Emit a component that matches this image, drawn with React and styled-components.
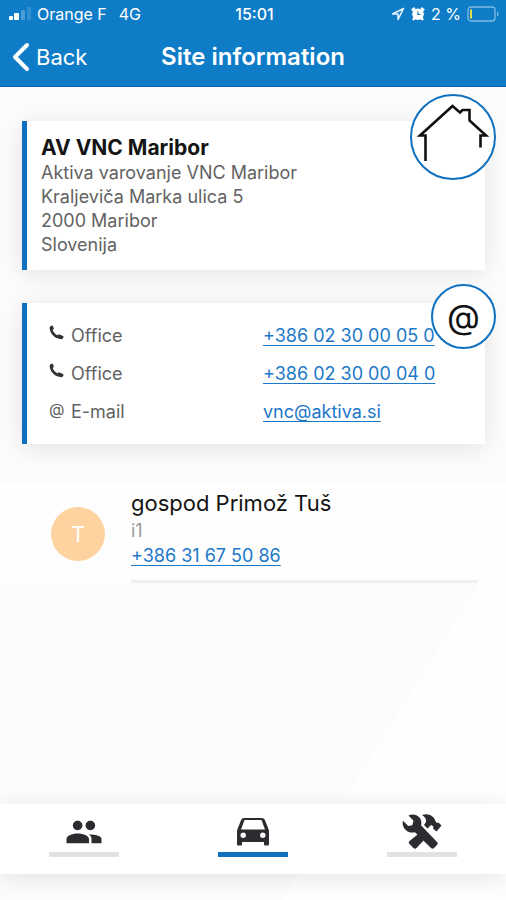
import React from 'react';
import styled, { createGlobalStyle, ThemeProvider } from 'styled-components';
import { IoMdPeople } from 'react-icons/io';

const theme = {
  blue: '#0f7cc8',
  accent: '#0f70bf',
  link: '#1c78c8',
  ink: '#141414',
  grey: '#626262',
  fontFamily: 'Inter, "Liberation Sans", sans-serif',
};

const lines = [
  'Aktiva varovanje VNC Maribor',
  'Kraljeviča Marka ulica 5',
  '2000 Maribor',
  'Slovenija',
];

const channels = [
  { kind: 'phone', label: 'Office', value: '+386 02 30 00 05 0', href: 'tel:+38602300005' },
  { kind: 'phone', label: 'Office', value: '+386 02 30 00 04 0', href: 'tel:+38602300004' },
  { kind: 'mail', label: 'E-mail', value: 'vnc@aktiva.si', href: 'mailto:vnc@aktiva.si' },
];

const SignalIcon = () => (
  <svg width="24" height="14" viewBox="0 0 24 14" fill="#fff" aria-hidden="true">
    <rect x="0" y="9" width="4" height="4" rx="1" />
    <rect x="5" y="6" width="5" height="7" rx="1" />
    <rect x="12" y="3" width="4" height="10" rx="1" opacity=".25" />
    <rect x="18" y="0" width="4" height="13" rx="1" opacity=".15" />
  </svg>
);

const LocationIcon = () => (
  <svg width="14" height="14" viewBox="0 0 14 14" fill="none" aria-hidden="true">
    <path d="M12.5 1.5 1.5 7H7v5.5z" stroke="#e6f2fb" strokeWidth="1.6" strokeLinejoin="round" />
  </svg>
);

const AlarmIcon = () => (
  <svg width="14" height="14" viewBox="0 0 14 14" aria-hidden="true">
    <path d="M1 3.5 3.8 1M13 3.5 10.2 1M2 13l2-2.5M12 13l-2-2.5" stroke="#fff" strokeWidth="2.5" />
    <circle cx="7" cy="7.2" r="5.8" fill="#fff" />
    <path d="M7 4.5v3h2.4" fill="none" stroke="#0f7cc8" strokeWidth="1.2" />
  </svg>
);

const BatteryIcon = () => (
  <svg width="33" height="16" viewBox="0 0 33 16" fill="none" aria-hidden="true">
    <rect x="1" y="1" width="27" height="14" rx="3" stroke="#7fbae3" strokeWidth="1.3" />
    <rect x="3" y="3.5" width="2" height="9" fill="#e3dd4d" />
    <path d="M30 5.5c2 .8 2 4.2 0 5z" fill="#7fbae3" />
  </svg>
);

const ChevronIcon = () => (
  <svg width="18" height="30" viewBox="0 0 18 30" fill="none" aria-hidden="true">
    <path d="M15 3 3 15l12 12" stroke="#fff" strokeWidth="4" strokeLinecap="round" strokeLinejoin="round" />
  </svg>
);

const HouseIcon = () => (
  <svg width="82" height="82" viewBox="0 0 82 82" fill="none" aria-hidden="true">
    <path
      d="M13.5 65V39.500H8L40.500 10l7.500 6.500 2.500-2.500h7V24.500L74 39.500H68.500V51.500"
      stroke="#111"
      strokeWidth="2.600"
    />
  </svg>
);

const PhoneIcon = () => (
  <svg width="16" height="16" viewBox="0 0 16 16" fill="#333" aria-hidden="true">
    <path d="M1.3 1.4 2.8.6c.5-.2.9 0 1.100.5l.9 2.300c.1.4 0 .7-.3.900l-.9.7c.9 2.200 2.500 4 4.800 5.200l1-.7c.3-.3.600-.3 1-.1l3.600 1.700c.5.3.7.7.5 1.200l-.6 1c-.3.600-.8.900-1.500.9C6.300 14 1 9.300.6 3.100c0-.8.200-1.400.7-1.700z" />
  </svg>
);

const CarIcon = () => (
  <svg width="34" height="28" viewBox="0 0 34 28" fill="currentColor" aria-hidden="true">
    <path
      fillRule="evenodd"
      d="M8.500 0h17c1.800 0 3 .8 3.600 2.500L33 12.500V26c0 1-.6 1.500-1.500 1.500h-2c-1 0-1.500-.5-1.500-1.500v-2H6v2c0 1-.5 1.500-1.500 1.500h-2C1.600 27.500 1 27 1 26V12.500L4.900 2.500C5.500.8 6.700 0 8.500 0zM8.500 2 5 11.500h24L25.500 2zM7.200 14.500a2.700 2.700 0 1 0 0 5.400 2.700 2.700 0 0 0 0-5.400zm19.600 0a2.700 2.700 0 1 0 0 5.400 2.700 2.700 0 0 0 0-5.400z"
    />
  </svg>
);

const ToolsIcon = () => (
  <svg width="40" height="36" viewBox="0 0 40 36" fill="currentColor" aria-hidden="true">
    <path d="M6.500 1.500C9.500-.2 14 0 17 3c2.300 2.300 2.900 5.500 2 8.300L35 28c1 1 1 2 0 3l-3 3c-1 1-2 1-3 0L13 18.200c-3.300.9-6.700.3-9.200-2.200C1 13.200 0 10 1 6.800l5.300 5.200 4-.8 1.200-4.400z" />
    <path d="m17.500 19 6 5.500-9 9.500c-1 1-2 1-3 0l-4-4c-1-1-1-2 0-3z" />
    <path d="M20 1c4.500-1.500 8.500-.5 11.500 2.500 1.800 1.800 1.500 4 3.500 5.500l1.500-.5 3 3-5 6-3.500-3 .5-2-2.500-1.500-3.500 3.500-3.500-3.500 2-3c.5-3-1-5-4-7z" />
  </svg>
);

const tabs = [
  { name: 'People', Icon: IoMdPeople },
  { name: 'Site', Icon: CarIcon, active: true },
  { name: 'Service', Icon: ToolsIcon },
];

const App = () => (
  <ThemeProvider theme={theme}>
    <GlobalStyle />
    <StyledPage>
      <StyledHeader>
        <StyledStatus>
          <StyledStatusGroup>
            <SignalIcon />
            <span>Orange F</span>
            <StyledNetwork>4G</StyledNetwork>
          </StyledStatusGroup>
          <StyledTime>15:01</StyledTime>
          <StyledStatusGroup $end>
            <LocationIcon />
            <AlarmIcon />
            <span>2 %</span>
            <BatteryIcon />
          </StyledStatusGroup>
        </StyledStatus>
        <StyledNav>
          <StyledBack type="button">
            <ChevronIcon />
            Back
          </StyledBack>
          <StyledTitle>Site information</StyledTitle>
        </StyledNav>
      </StyledHeader>

      <StyledMain>
        <StyledCard>
          <StyledBadge $size={86} $top={-27} $right={-11}>
            <HouseIcon />
          </StyledBadge>
          <StyledSiteName>AV VNC Maribor</StyledSiteName>
          {lines.map((line) => (
            <StyledLine key={line}>{line}</StyledLine>
          ))}
        </StyledCard>

        <StyledCard>
          <StyledBadge $size={65} $top={-19} $right={-11}>
            @
          </StyledBadge>
          <StyledChannels>
            {channels.map(({ kind, label, value, href }) => (
              <StyledChannel key={value}>
                <StyledKind>{kind === 'phone' ? <PhoneIcon /> : '@'}</StyledKind>
                <span>{label}</span>
                <StyledLink href={href}>{value}</StyledLink>
              </StyledChannel>
            ))}
          </StyledChannels>
        </StyledCard>
      </StyledMain>

      <StyledPerson>
        <StyledAvatar>T</StyledAvatar>
        <StyledDetails>
          <StyledName>gospod Primož Tuš</StyledName>
          <StyledRole>i1</StyledRole>
          <StyledLink href="tel:+38631675086">+386 31 67 50 86</StyledLink>
        </StyledDetails>
      </StyledPerson>

      <StyledTabs>
        {tabs.map(({ name, Icon, active }) => (
          <StyledTab key={name} type="button" aria-label={name} $active={active}>
            <Icon size={40} />
          </StyledTab>
        ))}
      </StyledTabs>
    </StyledPage>
  </ThemeProvider>
);

const GlobalStyle = createGlobalStyle`
  *, *::before, *::after {
    box-sizing: border-box;
  }
  body {
    margin: 0;
  }
  button {
    background: transparent;
    border: 0;
    padding: 0;
    font: inherit;
    color: inherit;
    cursor: pointer;
  }
  h1, h2, h3, p, ul {
    margin: 0;
    padding: 0;
  }
`;

const StyledPage = styled.div`
  min-height: 100vh;
  display: flex;
  flex-direction: column;
  padding-bottom: 26px;
  background: linear-gradient(122deg, #fcfcfc 0 79%, #fefefe 79%);
  color: ${({ theme }) => theme.grey};
  font-family: ${({ theme }) => theme.fontFamily};
  font-size: 18px;
  line-height: 24px;
`;

const StyledHeader = styled.header`
  background: ${({ theme }) => theme.blue};
  border-bottom: 1px solid #0a62b0;
  color: #fff;
`;

const StyledStatus = styled.div`
  display: grid;
  grid-template-columns: 1fr auto 1fr;
  align-items: center;
  height: 28px;
  padding: 0 6px 0 9px;
  font-size: 16px;
`;

const StyledStatusGroup = styled.div`
  display: flex;
  align-items: center;
  gap: ${({ $end }) => ($end ? '6px' : '4px')};
  justify-content: ${({ $end }) => ($end ? 'flex-end' : 'flex-start')};
`;

const StyledNetwork = styled.span`
  margin-left: 8px;
`;

const StyledTime = styled.span`
  font-weight: 500;
`;

const StyledNav = styled.div`
  display: grid;
  grid-template-columns: 1fr auto 1fr;
  align-items: center;
  height: 58px;
  padding: 0 12px;
`;

const StyledBack = styled.button`
  display: flex;
  align-items: center;
  gap: 6px;
  font-size: 22px;
`;

const StyledTitle = styled.h1`
  font-size: 24px;
  font-weight: 600;
`;

const StyledMain = styled.main`
  display: flex;
  flex-direction: column;
  gap: 33px;
  padding: 34px 21px 0 22px;
`;

const StyledCard = styled.section`
  position: relative;
  padding: 14px 14px 13px;
  background: #fff;
  border-left: 5px solid ${({ theme }) => theme.accent};
  box-shadow: 0 4px 24px rgba(0, 0, 0, 0.1);
`;

const StyledBadge = styled.div`
  position: absolute;
  top: ${({ $top }) => $top}px;
  right: ${({ $right }) => $right}px;
  width: ${({ $size }) => $size}px;
  height: ${({ $size }) => $size}px;
  display: flex;
  align-items: center;
  justify-content: center;
  background: #fff;
  border: 2px solid ${({ theme }) => theme.accent};
  border-radius: 50%;
  color: #111;
  font-size: 34px;
`;

const StyledSiteName = styled.h2`
  color: ${({ theme }) => theme.ink};
  font-size: 21px;
  font-weight: 700;
  line-height: 26px;
`;

const StyledLine = styled.p`
  line-height: 24px;
`;

const StyledChannels = styled.ul`
  list-style: none;
  padding-left: 8px;
`;

const StyledChannel = styled.li`
  display: grid;
  grid-template-columns: 22px 12fr 13fr;
  align-items: center;
  height: 38px;
`;

const StyledKind = styled.span`
  display: flex;
  padding-bottom: 6px;
  font-size: 16px;
`;

const StyledLink = styled.a`
  color: ${({ theme }) => theme.link};
  text-decoration: underline;
  text-decoration-thickness: 1px;
  text-underline-offset: 3px;
`;

const StyledPerson = styled.section`
  display: flex;
  align-items: center;
  gap: 26px;
  margin-top: 40px;
  padding: 0 28px 0 51px;
  background: #fefefe;
`;

const StyledAvatar = styled.div`
  flex: none;
  width: 54px;
  height: 54px;
  display: flex;
  align-items: center;
  justify-content: center;
  background: #ffd3a0;
  border-radius: 50%;
  color: #fff;
  font-size: 22px;
`;

const StyledDetails = styled.div`
  flex: 1;
  padding: 4px 0 12px;
  border-bottom: 3px solid #f0f0f0;
`;

const StyledName = styled.h3`
  color: ${({ theme }) => theme.ink};
  font-size: 22px;
  font-weight: 400;
  line-height: 30px;
`;

const StyledRole = styled.p`
  color: #9a9a9a;
  line-height: 26px;
`;

const StyledTabs = styled.nav`
  display: grid;
  grid-template-columns: repeat(3, 1fr);
  justify-items: center;
  margin-top: auto;
  padding: 8px 0 17px;
  background: #fff;
  box-shadow: 0 4px 24px rgba(0, 0, 0, 0.1);
`;

const StyledTab = styled.button`
  display: flex;
  align-items: center;
  justify-content: center;
  width: 70px;
  height: 45px;
  border-bottom: 5px solid ${({ $active, theme }) => ($active ? theme.accent : '#e2e2e2')};
  color: #2b2c30;
`;

export default App;
